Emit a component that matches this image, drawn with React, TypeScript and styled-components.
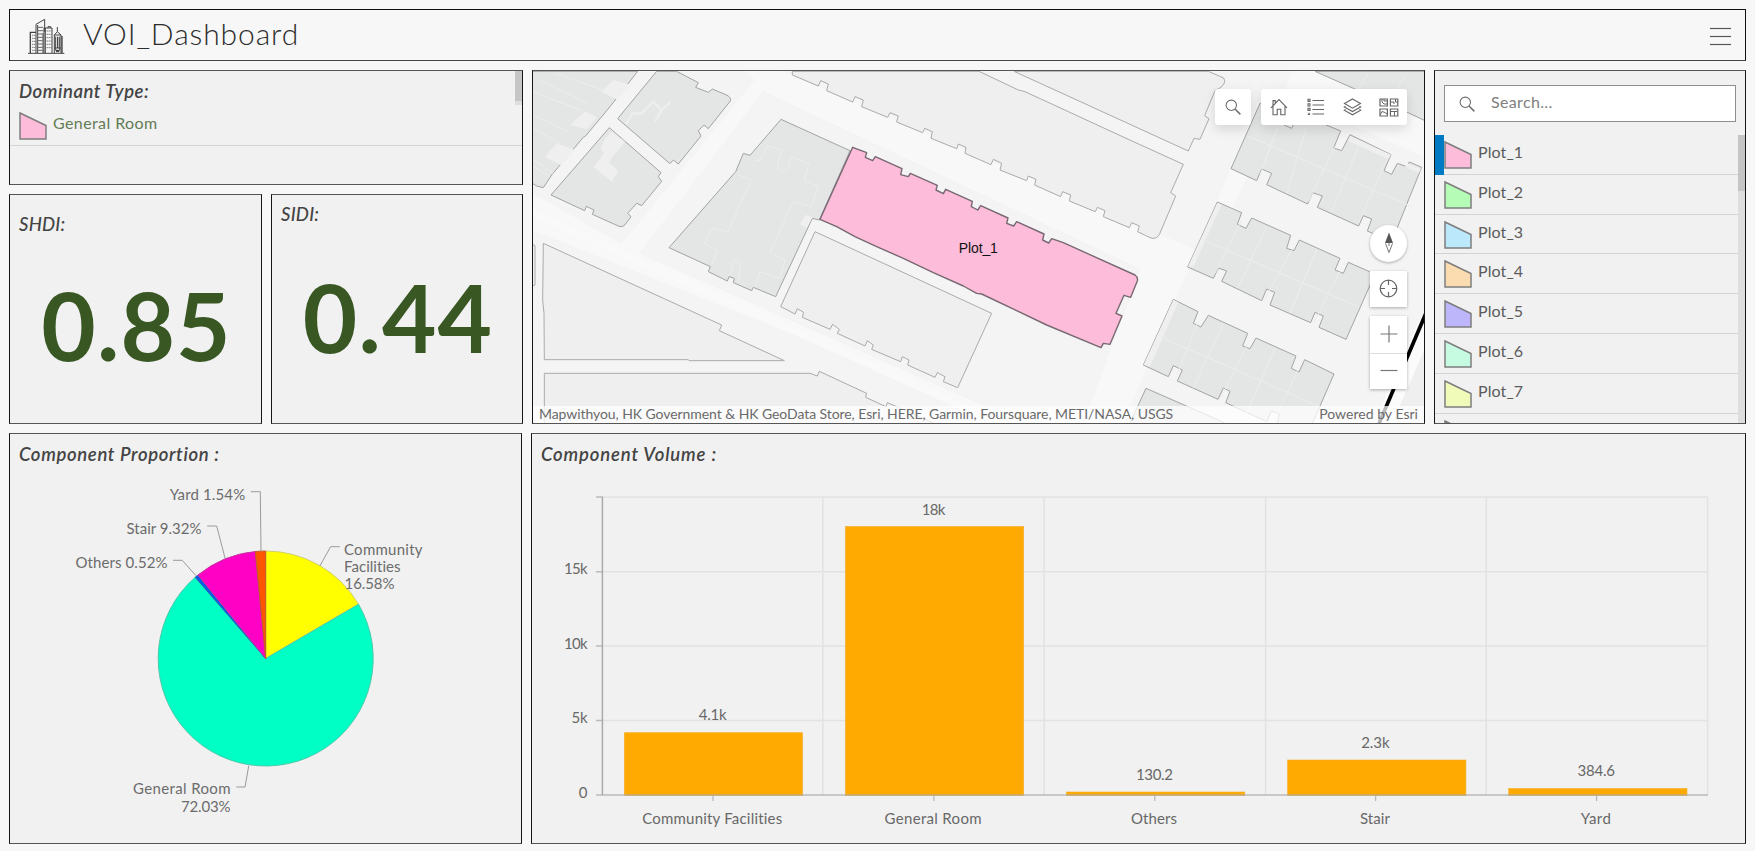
import React from "react";
import styled, { createGlobalStyle } from "styled-components";

const GlobalStyle = createGlobalStyle`
  * { box-sizing: border-box; }
  body {
    margin: 0;
    background: #f7f7f7;
    font-family: Lato, "Open Sans", sans-serif;
    font-variant-ligatures: none;
    color: #4c4c4c;
  }
`;

const Page = styled.div`
  display: flex;
  flex-direction: column;
  gap: 9px;
  width: 1755px;
  height: 851px;
  padding: 9px 9px 7px;
  overflow: hidden;
`;

const Header = styled.header`
  display: flex;
  align-items: center;
  flex: none;
  height: 52px;
  padding: 1px 14px 0 18px;
  border: 1px solid #111;
  border-bottom-color: #444;
`;

const Title = styled.h1`
  flex: 1;
  margin: 0 0 6px 18px;
  font-size: 30px;
  font-weight: 300;
  line-height: 36px;
  letter-spacing: 0.9px;
  color: #2c2c2c;
`;

const MenuButton = styled.button`
  display: flex;
  flex-direction: column;
  gap: 7px;
  width: 21px;
  padding: 0;
  border: 0;
  margin-top: 1px;
  background: none;
`;

const MenuLine = styled.span`
  height: 1px;
  background: #555;
  box-shadow: 0 0 1px #777;
`;

const TopRow = styled.div`
  display: grid;
  grid-template-columns: 514px 893px 312px;
  gap: 9px;
  flex: none;
  height: 354px;
`;

const BottomRow = styled.div`
  display: grid;
  grid-template-columns: 513px 1215px;
  gap: 9px;
  flex: none;
  height: 411px;
`;

const LeftColumn = styled.div`
  display: flex;
  flex-direction: column;
  gap: 9px;
`;

const Indicators = styled.div`
  display: grid;
  grid-template-columns: 253px 252px;
  gap: 9px;
  flex: 1;
`;

const Panel = styled.section`
  display: flex;
  flex-direction: column;
  min-width: 0;
  min-height: 0;
  overflow: hidden;
  border: 1px solid #161616;
  border-top-color: #555;
  border-bottom-color: #555;
  background: #f1f1f1;
`;

const DominantPanel = styled(Panel)`
  flex-direction: row;
  height: 115px;
`;

const DominantBody = styled.div`
  flex: 1;
`;

const Heading = styled.h2<{ $top?: number; $spacing?: number; $weight?: number }>`
  flex: none;
  margin: ${(p) => p.$top ?? 7}px 0 0 9px;
  font-size: 18.5px;
  font-weight: ${(p) => p.$weight ?? 600};
  font-style: italic;
  line-height: 24px;
  letter-spacing: ${(p) => p.$spacing ?? 0}px;
  color: #444;
`;

const DominantRow = styled.div`
  display: flex;
  gap: 6px;
  height: 43px;
  padding: 9px 0 0 9px;
  border-bottom: 1px solid #d4d4d4;
  margin-right: -7px;
`;

const RowLabel = styled.span<{ $color?: string; $spacing?: number }>`
  font-size: 16px;
  line-height: 22px;
  letter-spacing: ${(p) => p.$spacing ?? 0.1}px;
  color: ${(p) => p.$color ?? "#5c5c5c"};
`;

const ShortThumb = styled.div`
  width: 7px;
  height: 34px;
  background: #c6c6c6;
  border-bottom: 4px solid #dedede;
`;

const BigNumber = styled.div<{ $top: number; $spacing: number }>`
  margin-top: ${(p) => p.$top}px;
  padding-left: 2px;
  font-size: 94px;
  font-weight: 700;
  line-height: 100px;
  letter-spacing: ${(p) => p.$spacing}px;
  text-align: center;
  color: #385723;
`;

const MapPanel = styled(Panel)`
  position: relative;
  background: #f4f4f4;
`;

const MapCanvas = styled.svg`
  display: block;
  flex: none;
  width: 891px;
  height: 353px;
`;

const Attribution = styled.div`
  position: absolute;
  inset: auto 0 0 0;
  display: flex;
  justify-content: space-between;
  height: 17px;
  padding: 0 6px;
  background: rgba(255, 255, 255, 0.72);
  font-size: 14px;
  line-height: 15px;
  white-space: nowrap;
  color: #6a6a6a;
`;

const Credit = styled.span<{ $spacing: number }>`
  letter-spacing: ${(p) => p.$spacing}px;
`;

const MapTools = styled.div`
  position: absolute;
  top: 18px;
  right: 17px;
  display: flex;
  gap: 10px;
`;

const ToolGroup = styled.div`
  display: flex;
  height: 36px;
  border-radius: 3px;
  background: #fff;
  box-shadow: 0 4px 12px rgba(0, 0, 0, 0.13);
`;

const Tool = styled.button`
  display: grid;
  place-items: center;
  width: 36.5px;
  height: 36px;
  padding: 0;
  border: 0;
  background: none;
`;

const MapNav = styled.div`
  position: absolute;
  top: 154px;
  right: 17px;
  display: flex;
  flex-direction: column;
  gap: 9px;
`;

const NavButton = styled.button<{ $round?: boolean }>`
  display: grid;
  place-items: center;
  width: 37px;
  height: 36.5px;
  padding: 0;
  border: 0;
  border-radius: ${(p) => (p.$round ? "50%" : "0")};
  background: #fff;
  box-shadow: 0 1px 3px rgba(0, 0, 0, 0.3);
`;

const ZoomStack = styled.div`
  box-shadow: 0 1px 3px rgba(0, 0, 0, 0.3);
`;

const ZoomButton = styled(NavButton)`
  box-shadow: none;
  & + & {
    border-top: 1px solid #dedede;
  }
`;

const SearchBox = styled.label`
  display: flex;
  align-items: center;
  flex: none;
  gap: 16px;
  height: 37px;
  margin: 14px 9px 13px;
  padding-left: 14px;
  border: 1px solid #8e8e8e;
  background: #fff;
`;

const SearchText = styled.span`
  margin-top: -4px;
  font-size: 16px;
  letter-spacing: 0.35px;
  color: #808080;
`;

const ListArea = styled.div`
  display: flex;
  flex: 1;
  min-height: 0;
`;

const List = styled.ul`
  flex: 1;
  margin: 0;
  padding: 0;
  list-style: none;
`;

const ListItem = styled.li<{ $selected?: boolean }>`
  display: flex;
  gap: 6px;
  height: 39.8px;
  padding: 6px 0 0;
  border-left: 9px solid ${(p) => (p.$selected ? "#007ac2" : "transparent")};
  background: linear-gradient(#d3d3d3, #d3d3d3) left bottom / 100% 1px no-repeat border-box;
`;

const ScrollTrack = styled.div`
  width: 7px;
  background: #dedede;
`;

const ScrollThumb = styled.div`
  height: 56px;
  background: #c5c5c5;
`;

const Chart = styled.svg`
  display: block;
  flex: none;
  font-family: Lato, "Open Sans", sans-serif;
  font-size: 15px;
`;

const Swatch = ({ color }: { color: string }) => (
  <svg width="28" height="28" viewBox="0 0 28 28">
    <path d="M1 1 L27 13.5 V27 H1 Z" fill={color} stroke="#7d7d7d" strokeWidth="1.5" />
  </svg>
);

const BuildingsIcon = () => (
  <svg width="37" height="36" viewBox="0 0 111 108" fill="none" stroke="#444">
    <path d="M0 106 H109" strokeWidth="3" />
    <path d="M7 105 V43 H24" strokeWidth="4" />
    <path d="M24 105 V19 L50 4 V42 M29 21 V105 M45 45 V105" strokeWidth="3" />
    <path d="M48 105 V30 H72 V105 M52 30 V105 M60 30 V26 H68 V30" strokeWidth="3" />
    <path d="M79 105 V51 L88 41 L99 51 V105 M79 51 H99 M88 41 V27 M83 98 V56 M95 98 V56 M79 90 H99" strokeWidth="3" />
    <path d="M89 56 V90 M102 54 V105" strokeWidth="4" />
    <path d="M30 28 H46 M30 38 H46 M30 48 H44 M30 58 H44 M30 68 H44 M30 78 H44 M30 88 H44 M30 97 H44" strokeWidth="3" stroke="#666" />
    <path d="M13 52 H23 M13 61 H23 M13 70 H23 M13 79 H23 M13 88 H23 M13 97 H23" strokeWidth="3" strokeDasharray="3 3" />
    <path d="M56 39 H70 M56 49 H70 M56 59 H70 M56 69 H70 M56 79 H70 M56 89 H70" strokeWidth="3" strokeDasharray="3 3" />
    <path d="M84 99 H94" strokeWidth="7" />
  </svg>
);

const SearchIcon = () => (
  <svg width="16" height="16" viewBox="0 0 16 16" fill="none" stroke="#6e6e6e" strokeWidth="1.1">
    <circle cx="6.3" cy="6.3" r="5.2" />
    <path d="M10 10 L15.4 15.4" strokeWidth="1.5" />
  </svg>
);

const HomeIcon = () => (
  <svg width="18" height="18" viewBox="0 0 18 18" fill="none" stroke="#666" strokeWidth="1.1">
    <path d="M1 9.8 L9 1.6 L17 9.8 M3 8 V16.7 H7.2 V11.3 H10.8 V16.7 H15 V8 M3 7.5 V2.6 H5.3 V5" />
  </svg>
);

const LegendIcon = () => (
  <svg width="18" height="18" viewBox="0 0 18 18" fill="none" stroke="#666">
    <path d="M5.5 2.5 H17 M5.5 7 H17 M5.5 11.5 H17 M5.5 16 H17" strokeWidth="1.1" />
    <path d="M1 1.2 H3 V3.4 H1 Z M1 5.8 H3 V8 H1 Z M1 10.3 H3 V12.4 H1 Z" strokeWidth="1.1" />
    <path d="M0.5 17 L2 14.3 L3.5 17 Z" fill="#666" stroke="none" />
  </svg>
);

const LayersIcon = () => (
  <svg width="19" height="18" viewBox="0 0 19 18" fill="none" stroke="#666" strokeWidth="1.1">
    <path d="M9.5 1 L17.5 5.6 L9.5 10.2 L1.5 5.6 Z" />
    <path d="M2.5 8.2 L1.3 9 L9.5 13.6 L17.7 9 L16.5 8.2 M2.5 11.4 L1.3 12.2 L9.5 16.8 L17.7 12.2 L16.5 11.4" />
  </svg>
);

const BasemapIcon = () => (
  <svg width="20" height="19" viewBox="0 0 20 19" fill="none" stroke="#666" strokeWidth="1.2">
    <path d="M1 1 H8.4 V8 H1 Z M11.4 1 H18.8 V8 H11.4 Z M1 11 H8.4 V18 H1 Z M11.4 11 H18.8 V18 H11.4 Z" />
    <path d="M3 1 V4 L5 6 H8 M5 1 V3 H8 M12 4 H15 V6 M16.5 1 V4 H19 M1 17 L3 13.5 L6 14.5 L8 16 M12 13.5 H18 M15.5 14 V18" strokeWidth="1" />
  </svg>
);

const plainPlots = [
  "M22 553 L30 557 L30 675 L22 678",
  "M22 50 L35 50 L48 34 H22 Z",
  "M55 550 L590 795 L583 812 L778 902 L492 902 L490 899 L58 899 L57 760 L53 720 Z",
  "M58 1100 V940 H855 L877 948 L883 934 L1025 1000 L1022 1012 L1083 1040 L1087 1028 L1120 1042 L1250 1100 Z",
  "M870 515 L1400 760 L1298 983 L1255 965 L1260 950 L1237 938 L1230 952 L1148 915 L1152 900 L1132 890 L1127 905 L1040 868 L1045 855 L1027 842 L1020 858 L937 820 L943 808 L923 793 L915 808 L832 772 L836 757 L817 746 L810 762 L767 740 Z",
  "M802 34 V45 L880 78 L887 62 L910 72 L905 92 L983 126 L990 110 L1015 120 L1010 140 L1088 172 L1095 158 L1120 168 L1115 186 L1193 218 L1199 205 L1222 215 L1218 235 L1295 266 L1300 252 L1323 262 L1320 280 L1398 314 L1405 298 L1430 310 L1425 330 L1505 362 L1510 348 L1533 358 L1529 375 L1607 410 L1613 395 L1637 405 L1633 423 L1711 455 L1717 442 L1740 452 L1735 470 L1813 503 L1820 488 L1843 498 L1838 515 L1875 533 Q1893 540 1903 524 L1952 408 L1937 398 L1975 313 L1810 238 L1500 95 L1480 90 L1362 34 Z",
  "M1467 34 L1815 193 L1990 273 L2007 235 L2025 238 L2052 176 L2039 167 L2071 90 L2082 86 Q2106 70 2096 54 L2050 34 Z",
];

const westBuildings = [
  "M22 34 H338 L255 140 L182 228 L175 232 L80 345 L55 383 L35 378 L22 370 Z",
  "M395 34 H455 L520 68 L512 82 L550 97 L562 87 L605 105 Q620 113 616 123 L550 206 L537 195 L520 212 L528 228 L460 312 L445 300 L435 311 L278 176 Z",
  "M253 203 L408 338 L400 350 L410 364 L350 437 L335 430 L308 460 L318 470 L300 494 Q292 504 282 499 L202 463 L207 450 L184 439 L179 452 L78 405 Z",
  "M768 178 L975 272 L883 480 L862 475 L752 710 L685 682 L680 692 L625 668 L628 655 L612 650 L607 663 L550 635 L556 620 L432 563 L632 335 L655 280 L675 286 Z",
];

const eastBuildings = [
  "M2215 130 L2128 326 L2205 362 L2220 327 L2250 340 L2235 374 L2358 432 L2373 398 L2402 408 L2387 442 L2511 498 L2525 467 L2550 477 L2537 513 L2610 545 L2700 322 L2663 306 L2655 320 L2627 310 L2610 343 L2587 332 L2608 284 L2485 224 L2460 272 L2436 264 L2457 213 L2330 160 L2310 205 L2287 195 L2300 150 Z",
  "M2087 426 L2160 458 L2147 493 L2173 505 L2190 474 L2307 526 L2295 565 L2317 572 L2333 540 L2455 595 L2440 630 L2465 640 L2480 607 L2560 642 L2473 838 L2392 802 L2405 768 L2380 757 L2367 788 L2245 735 L2259 697 L2235 687 L2220 722 L2100 664 L2115 633 L2090 624 L2075 655 L1998 621 Z",
  "M1955 718 L2029 755 L2015 790 L2038 801 L2060 766 L2178 820 L2163 858 L2185 866 L2203 834 L2323 888 L2309 925 L2332 936 L2349 899 L2437 942 L2368 1100 H2265 L2273 1062 L2250 1052 L2235 1085 L2112 1028 L2125 994 L2105 984 L2089 1018 L1967 963 L1982 930 L1955 917 L1940 950 L1865 915 Z",
  "M1873 985 L2090 1080 L2130 1100 H1820 Z",
  "M2380 34 L2495 85 L2600 130 L2712 183 V34 Z",
];

const courtyards = [
  "M265 60 L320 75 L275 118 L228 95 Z M180 153 L217 172 L185 208 L135 195 Z M95 250 L150 270 L108 315 L60 290 Z",
  "M240 235 L262 215 L300 245 L262 290 L252 308 L280 333 L260 365 L205 320 L237 280 L226 265 Z",
  "M842 465 L862 472 L845 505 L825 492 Z",
];

const eastEdges =
  "M2485 228 L2608 284 L2600 298 L2478 242 Z M2087 428 L2100 434 L2015 620 L1999 620 Z M1955 720 L1970 727 L1885 920 L1866 914 Z M2657 310 L2698 326 L2692 338 L2650 320 Z";

const Plot1 =
  "M983 262 L1025 278 L1021 292 L1043 302 L1051 290 L1131 326 L1127 344 L1150 350 L1156 340 L1237 376 L1233 390 L1255 401 L1262 388 L1342 424 L1339 440 L1358 450 L1367 437 L1449 474 L1445 490 L1466 498 L1475 485 L1557 522 L1553 540 L1571 549 L1580 536 L1615 548 L1830 645 Q1840 652 1837 663 L1817 712 L1797 706 L1773 760 L1791 768 L1755 853 L1735 850 L1728 863 L1565 795 L1475 752 L1370 702 L1355 700 L1315 678 L1225 638 L1135 595 L1055 560 L990 530 L935 500 L885 478 Z";

// Map geometry is kept at three units per screen pixel.
const PlotMap = () => (
  <MapCanvas viewBox="24 33 2673 1059" preserveAspectRatio="none">
    <path d="M22 400 L290 553 L690 60 L640 20 H740 L2060 590 L2310 20 H2500 L2720 135 V300 L2330 130 L2200 130 L1790 1100 H1500 L22 510 Z" fill="#f8f8f8" />
    <path d="M345 580 L715 95 L1845 628 L1690 1045 L1500 1090 Z" fill="#f4f4f4" stroke="#f1f1f1" strokeWidth="2" />
    <path d="M22 460 L1450 1100" stroke="#f9f9f9" strokeWidth="22" />
    <path d="M2700 850 L2590 1100 H2700 Z" fill="#efefef" />
    <path d="M2712 775 L2570 1100" stroke="#fbfbfb" strokeWidth="50" />
    <g fill="#efefef" stroke="#ababab" strokeWidth="3">
      {plainPlots.map((d) => <path key={d} d={d} />)}
    </g>
    <g fill="#e4e6e5" stroke="#a2a3a3" strokeWidth="3">
      {westBuildings.map((d) => <path key={d} d={d} />)}
    </g>
    <g fill="#eeefee">{courtyards.map((d) => <path key={d} d={d} />)}</g>
    <g fill="none" stroke="#ecedec" strokeWidth="3">
      <path d="M90 40 L240 92 M40 60 L190 130 M24 95 L170 152 M24 165 L130 215 M24 205 L110 252 M24 300 L85 340 M24 318 L75 350" />
      <path d="M303 192 L323 160 L350 160 L385 125 L410 150 L390 185 M405 152 L436 127" strokeWidth="8" />
      <path d="M690 303 L705 300 L728 258 L770 270 L757 318 Q772 345 787 328 L798 291 L852 310 L838 360 L878 380 L860 440 L805 425 L735 577 L780 600 L765 655 L705 635 L690 680" />
      <path d="M640 345 L678 360 L608 515 L560 505 L538 552 L577 570 L562 610 M615 645 L625 600 L647 610 L640 670" />
    </g>
    <g transform="translate(-10 0)">
      <g fill="#e4e6e5" stroke="#a2a3a3" strokeWidth="3">
        {eastBuildings.map((d) => <path key={d} d={d} />)}
      </g>
      <path d={eastEdges} fill="#eeefee" />
      <g fill="none" stroke="#ecedec" strokeWidth="3">
        <path d="M2178 228 L2670 440 M2272 190 L2215 345 M2360 180 L2296 400 M2440 260 L2360 425 M2515 250 L2430 455 M2595 300 L2510 490" />
        <path d="M2045 540 L2510 740 M2160 480 L2080 640 M2235 500 L2150 680 M2310 570 L2225 725 M2385 570 L2305 760 M2455 635 L2375 790" />
        <path d="M1915 830 L2395 1040 M2030 785 L1965 945 M2105 790 L2015 985 M2180 850 L2095 1018 M2260 865 L2175 1060 M2330 925 L2255 1090" />
        <path d="M2540 40 L2510 90 M2655 40 L2600 130" />
      </g>
    </g>
    <path d="M2712 738 L2558 1100" stroke="#000" strokeWidth="11" />
    <path d={Plot1} fill="#fcbcda" stroke="#776872" strokeWidth="4.2" strokeLinejoin="round" />
    <text x="1360" y="579" textAnchor="middle" textLength="117" fontFamily="Liberation Sans, sans-serif" fontSize="42" fill="#111">Plot_1</text>
  </MapCanvas>
);

const plots = [
  { name: "Plot_1", color: "#fcbcda" },
  { name: "Plot_2", color: "#b5fcb6" },
  { name: "Plot_3", color: "#bbe8fa" },
  { name: "Plot_4", color: "#fbdcb0" },
  { name: "Plot_5", color: "#beb6fb" },
  { name: "Plot_6", color: "#c7fbe1" },
  { name: "Plot_7", color: "#f0fbb9" },
  { name: "", color: "#d9d9d9" },
];

const slices = [
  { value: 16.58, color: "#ffff00", stroke: "#cfcf70" },
  { value: 72.03, color: "#00ffc5", stroke: "#4cc9ab" },
  { value: 0.52, color: "#005ce6", stroke: "#2a62b8" },
  { value: 9.32, color: "#ff00c5", stroke: "#c2359f" },
  { value: 1.54, color: "#ff5500", stroke: "#c25a2a" },
];

const pieLabels = [
  { text: "Yard 1.54%", x: 169.7, y: 500, w: 75.5 },
  { text: "Stair 9.32%", x: 126.5, y: 533.7, w: 75 },
  { text: "Others 0.52%", x: 75.5, y: 568.3, w: 92 },
  { text: "Community", x: 344, y: 555, w: 78.5 },
  { text: "Facilities", x: 344, y: 571.5, w: 56.5 },
  { text: "16.58%", x: 344.5, y: 588.5, w: 50 },
  { text: "General Room", x: 133, y: 794.3, w: 97.5 },
  { text: "72.03%", x: 181, y: 811.5, w: 49.5 },
];

const ProportionChart = () => {
  const cx = 265.7;
  const cy = 658.5;
  const r = 107.5;
  let angle = 0;
  return (
    <Chart width="511" height="377" viewBox="10 466 511 377">
      {slices.map((s) => {
        const a0 = angle;
        const a1 = angle + (s.value / 99.99) * Math.PI * 2;
        angle = a1;
        const p = (a: number) => `${cx + r * Math.sin(a)} ${cy - r * Math.cos(a)}`;
        return (
          <path
            key={s.color}
            d={`M${cx} ${cy} L${p(a0)} A${r} ${r} 0 ${s.value > 50 ? 1 : 0} 1 ${p(a1)} Z`}
            fill={s.color}
            stroke={s.stroke}
            strokeWidth="1"
            strokeLinejoin="round"
          />
        );
      })}
      <path
        d="M250.8 491.7 H260.3 L261 551 M207.2 526 H216.7 L225 558 M173 560.3 H182.2 L196 575.7 M339.8 546.7 H330.6 L319.8 566 M236.3 787 H245 L248.8 765.5"
        fill="none"
        stroke="#9a9a9a"
      />
      {pieLabels.map((l) => (
        <text key={l.text} x={l.x} y={l.y} textLength={l.w} fill="#6c6c6c">{l.text}</text>
      ))}
    </Chart>
  );
};

const bars = [
  { name: "Community Facilities", w: 140, label: "4.1k", lw: 28, top: 732.7, ly: 720 },
  { name: "General Room", w: 97, label: "18k", lw: 23.5, top: 526.5, ly: 515.2 },
  { name: "Others", w: 46, label: "130.2", lw: 37, top: 792, ly: 780 },
  { name: "Stair", w: 30, label: "2.3k", lw: 28.5, top: 760, ly: 748 },
  { name: "Yard", w: 30, label: "384.6", lw: 37.5, top: 788.5, ly: 776 },
];

const ticks = [
  { label: "15k", y: 571.7, w: 23.5 },
  { label: "10k", y: 646, w: 23.5 },
  { label: "5k", y: 720.5, w: 16 },
  { label: "0", y: 795, w: 8.5 },
];

const VolumeChart = () => (
  <Chart width="1213" height="377" viewBox="532 466 1213 377" fill="#686868">
    <path
      d="M602 497 H1708 M602 571.7 H1708 M602 646 H1708 M602 720.5 H1708 M822.8 497 V795 M1044.2 497 V795 M1265.6 497 V795 M1486.2 497 V795 M1707.6 497 V795"
      stroke="#e2e2e2"
      strokeWidth="1.4"
    />
    {bars.map((b, i) => (
      <rect key={b.name} x={624.3 + i * 221.1} y={b.top} width="178.3" height={795.5 - b.top} fill="#ffaa00" stroke="#f5ad2c" strokeWidth="0.6" />
    ))}
    <path d="M596 497 H603 M596 571.7 H602 M596 646 H602 M596 720.5 H602 M596 795 H1708" stroke="#a8a8a8" strokeOpacity="0.75" strokeWidth="1.6" />
    <path d="M602.4 497 V795" stroke="#aaa" strokeWidth="1.5" />
    {bars.map((b, i) => {
      const x = 713 + i * 220.9;
      return (
        <g key={b.name}>
          <path d={`M${x} 795 V801`} stroke="#aaa" />
          <text x={x - 0.3} y={b.ly} textAnchor="middle" textLength={b.lw}>{b.label}</text>
          <text x={x - 0.8} y="823.7" textAnchor="middle" textLength={b.w}>{b.name}</text>
        </g>
      );
    })}
    {ticks.map((t) => (
      <text key={t.label} x="587.5" y={t.y + 2.5} textAnchor="end" textLength={t.w}>{t.label}</text>
    ))}
  </Chart>
);

export default function App() {
  return (
    <>
      <GlobalStyle />
      <Page>
        <Header>
          <BuildingsIcon />
          <Title>VOI_Dashboard</Title>
          <MenuButton aria-label="Menu">
            <MenuLine />
            <MenuLine />
            <MenuLine />
          </MenuButton>
        </Header>
        <TopRow>
          <LeftColumn>
            <DominantPanel>
              <DominantBody>
                <Heading $top={8} $spacing={0.55}>Dominant Type:</Heading>
                <DominantRow>
                  <Swatch color="#fcbcda" />
                  <RowLabel $color="#647c55" $spacing={0.4}>General Room</RowLabel>
                </DominantRow>
              </DominantBody>
              <ShortThumb />
            </DominantPanel>
            <Indicators>
              <Panel>
                <Heading $top={17} $spacing={0.2} $weight={500}>SHDI:</Heading>
                <BigNumber $top={39} $spacing={1.2}>0.85</BigNumber>
              </Panel>
              <Panel>
                <Heading $top={7} $spacing={0.2} $weight={500}>SIDI:</Heading>
                <BigNumber $top={41} $spacing={1.2}>0.44</BigNumber>
              </Panel>
            </Indicators>
          </LeftColumn>
          <MapPanel>
            <PlotMap />
            <Attribution>
              <Credit $spacing={-0.07}>
                Mapwithyou, HK Government &amp; HK GeoData Store, Esri, HERE, Garmin, Foursquare, METI/NASA, USGS
              </Credit>
              <Credit $spacing={0.03}>Powered by Esri</Credit>
            </Attribution>
            <MapTools>
              <ToolGroup>
                <Tool aria-label="Search"><SearchIcon /></Tool>
              </ToolGroup>
              <ToolGroup>
                <Tool aria-label="Home"><HomeIcon /></Tool>
                <Tool aria-label="Legend"><LegendIcon /></Tool>
                <Tool aria-label="Layers"><LayersIcon /></Tool>
                <Tool aria-label="Basemaps"><BasemapIcon /></Tool>
              </ToolGroup>
            </MapTools>
            <MapNav>
              <NavButton $round aria-label="Compass">
                <svg width="10" height="22" viewBox="0 0 10 22">
                  <path d="M5 0.5 L9 11 H1 Z" fill="#555" />
                  <path d="M1.5 11.5 L5 20.5 L8.5 11.5 M5 11 V14" fill="none" stroke="#777" />
                </svg>
              </NavButton>
              <NavButton aria-label="Locate">
                <svg width="19" height="19" viewBox="0 0 19 19" fill="none" stroke="#666" strokeWidth="1.2">
                  <circle cx="9.5" cy="9.5" r="8.3" />
                  <path d="M9.5 1 V6 M9.5 13 V18 M1 9.5 H6 M13 9.5 H18" />
                </svg>
              </NavButton>
              <ZoomStack>
                <ZoomButton aria-label="Zoom in">
                  <svg width="18" height="18" viewBox="0 0 18 18" stroke="#777" strokeWidth="1.2">
                    <path d="M9 0.5 V17.5 M0.5 9 H17.5" />
                  </svg>
                </ZoomButton>
                <ZoomButton aria-label="Zoom out">
                  <svg width="18" height="18" viewBox="0 0 18 18" stroke="#777" strokeWidth="1.2">
                    <path d="M0.5 8.5 H17.5" />
                  </svg>
                </ZoomButton>
              </ZoomStack>
            </MapNav>
          </MapPanel>
          <Panel>
            <SearchBox>
              <SearchIcon />
              <SearchText>Search...</SearchText>
            </SearchBox>
            <ListArea>
              <List>
                {plots.map((p, i) => (
                  <ListItem key={p.color} $selected={i === 0}>
                    <Swatch color={p.color} />
                    {p.name && <RowLabel>{p.name}</RowLabel>}
                  </ListItem>
                ))}
              </List>
              <ScrollTrack>
                <ScrollThumb />
              </ScrollTrack>
            </ListArea>
          </Panel>
        </TopRow>
        <BottomRow>
          <Panel>
            <Heading $top={8} $spacing={0.65}>Component Proportion :</Heading>
            <ProportionChart />
          </Panel>
          <Panel>
            <Heading $top={8} $spacing={0.85}>Component Volume :</Heading>
            <VolumeChart />
          </Panel>
        </BottomRow>
      </Page>
    </>
  );
}
